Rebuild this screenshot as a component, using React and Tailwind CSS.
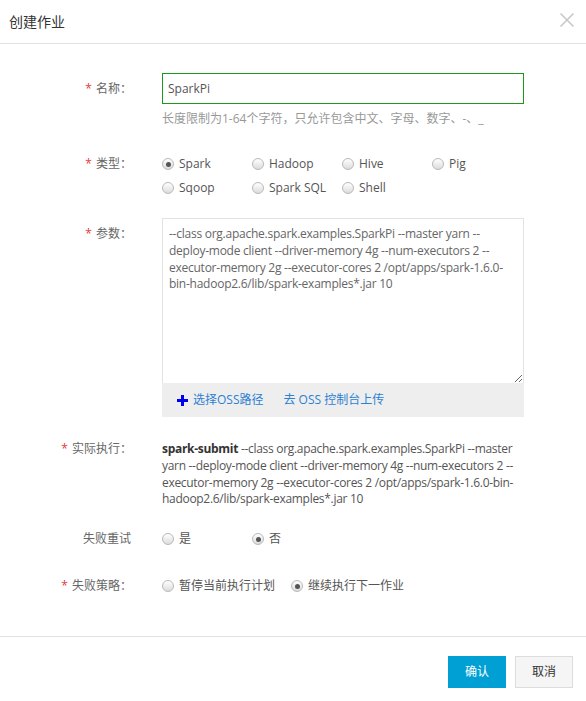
import React from 'react';

const font = { fontFamily: '"Open Sans", "Noto Sans CJK SC", sans-serif' };

const Radio = ({ checked, label, className = '' }) => (
  <label className={`flex items-center h-6 ${className}`}>
    <span className="w-3 h-3 rounded-full border border-[#b9b9b9] bg-gradient-to-b from-[#ffffff] to-[#dcdcdc] flex items-center justify-center shrink-0">
      {checked && <span className="w-[5px] h-[5px] rounded-full bg-[#555]" />}
    </span>
    <span className="ml-[5px] text-[12px] text-[#555] whitespace-nowrap">{label}</span>
  </label>
);

const Label = ({ required, children, colon = true, className = '' }) => (
  <div className={`w-[132px] shrink-0 text-right text-[12px] text-[#666] ${className}`}>
    {required && <span className="text-[#e4393c] mr-[4px]">*</span>}
    {children}
    {colon && '：'}
  </div>
);

const CreateJobDialog = () => {
  const args =
    '--class org.apache.spark.examples.SparkPi --master yarn --deploy-mode client --driver-memory 4g --num-executors 2 --executor-memory 2g --executor-cores 2 /opt/apps/spark-1.6.0-bin-hadoop2.6/lib/spark-examples*.jar 10';

  return (
    <div className="w-[586px] h-[701px] bg-white overflow-hidden" style={font}>
      {/* Header */}
      <div className="h-[44px] border-b border-[#e1e1e1] flex items-center justify-between pl-[9px] pr-[11px]">
        <h2 className="text-[14px] text-[#333] font-normal">创建作业</h2>
        <svg width="16" height="16" viewBox="0 0 16 16" className="-mt-[3px]">
          <path d="M1.5 1.5 L14.5 14.5 M14.5 1.5 L1.5 14.5" stroke="#c8c8c8" strokeWidth="1.6" />
        </svg>
      </div>

      {/* Form */}
      <div className="pt-[29px]">
        {/* 名称 */}
        <div className="flex items-center">
          <Label required>名称</Label>
          <div className="ml-[30px] w-[362px] h-[31px] border border-[#1a9a1a] flex items-center px-[5px] text-[12px] text-[#555]">
            SparkPi
          </div>
        </div>
        <div className="ml-[162px] mt-[7px] text-[12px] leading-[16px] text-[#999]">
          长度限制为1-64个字符，只允许包含中文、字母、数字、-、_
        </div>

        {/* 类型 */}
        <div className="flex mt-[25px]">
          <Label required className="leading-6">类型</Label>
          <div className="ml-[30px] grid grid-cols-[90px_90px_90px_90px]">
            <Radio checked label="Spark" />
            <Radio label="Hadoop" />
            <Radio label="Hive" />
            <Radio label="Pig" />
            <Radio label="Sqoop" />
            <Radio label="Spark SQL" />
            <Radio label="Shell" />
          </div>
        </div>

        {/* 参数 */}
        <div className="flex mt-[18px]">
          <Label required className="pt-[8px] leading-[16.8px]">参数</Label>
          <div className="ml-[30px] w-[362px]">
            <textarea
              readOnly
              defaultValue={args}
              className="block w-full h-[165px] border border-[#e3e3e3] border-b-0 px-[6px] pt-[7px] text-[12px] leading-[16.8px] tracking-[-0.25px] text-[#666] outline-none resize-y"
              style={font}
            />
            <div className="h-[34px] bg-[#eeeeee] flex items-center pl-[15px] text-[12px] text-[#2d7fd4]">
              <svg width="11" height="11" viewBox="0 0 11 11" className="mr-[5px]">
                <rect x="4" y="0" width="3" height="11" fill="#0000f0" />
                <rect x="0" y="4" width="11" height="3" fill="#0000f0" />
              </svg>
              <span>选择OSS路径</span>
              <span className="ml-[20px]">去 OSS 控制台上传</span>
            </div>
          </div>
        </div>

        {/* 实际执行 */}
        <div className="flex mt-[24px]">
          <Label required className="leading-[16.8px]">实际执行</Label>
          <div className="ml-[30px] w-[362px] text-[12px] leading-[16.8px] tracking-[-0.3px] text-[#555] break-words">
            <span className="font-bold text-[#333]">spark-submit</span> {args}
          </div>
        </div>

        {/* 失败重试 */}
        <div className="flex items-center mt-[19px]">
          <Label colon={false} className="leading-6 pr-[1px]">失败重试</Label>
          <div className="ml-[30px] grid grid-cols-[90px_90px]">
            <Radio label="是" />
            <Radio checked label="否" />
          </div>
        </div>

        {/* 失败策略 */}
        <div className="flex items-center mt-[23px]">
          <Label required className="leading-6">失败策略</Label>
          <div className="ml-[30px] flex">
            <Radio label="暂停当前执行计划" className="w-[129px]" />
            <Radio checked label="继续执行下一作业" />
          </div>
        </div>
      </div>

      {/* Footer */}
      <div className="mt-[38px] border-t border-[#e1e1e1] flex justify-end gap-[9px] pt-[19px] pr-[13px]">
        <button className="w-[58px] h-[32px] bg-[#00a0d4] text-white text-[12px]">确认</button>
        <button className="w-[58px] h-[32px] bg-[#f5f5f5] border border-[#dddddd] text-[#333] text-[12px]">取消</button>
      </div>
    </div>
  );
};

export default CreateJobDialog;
